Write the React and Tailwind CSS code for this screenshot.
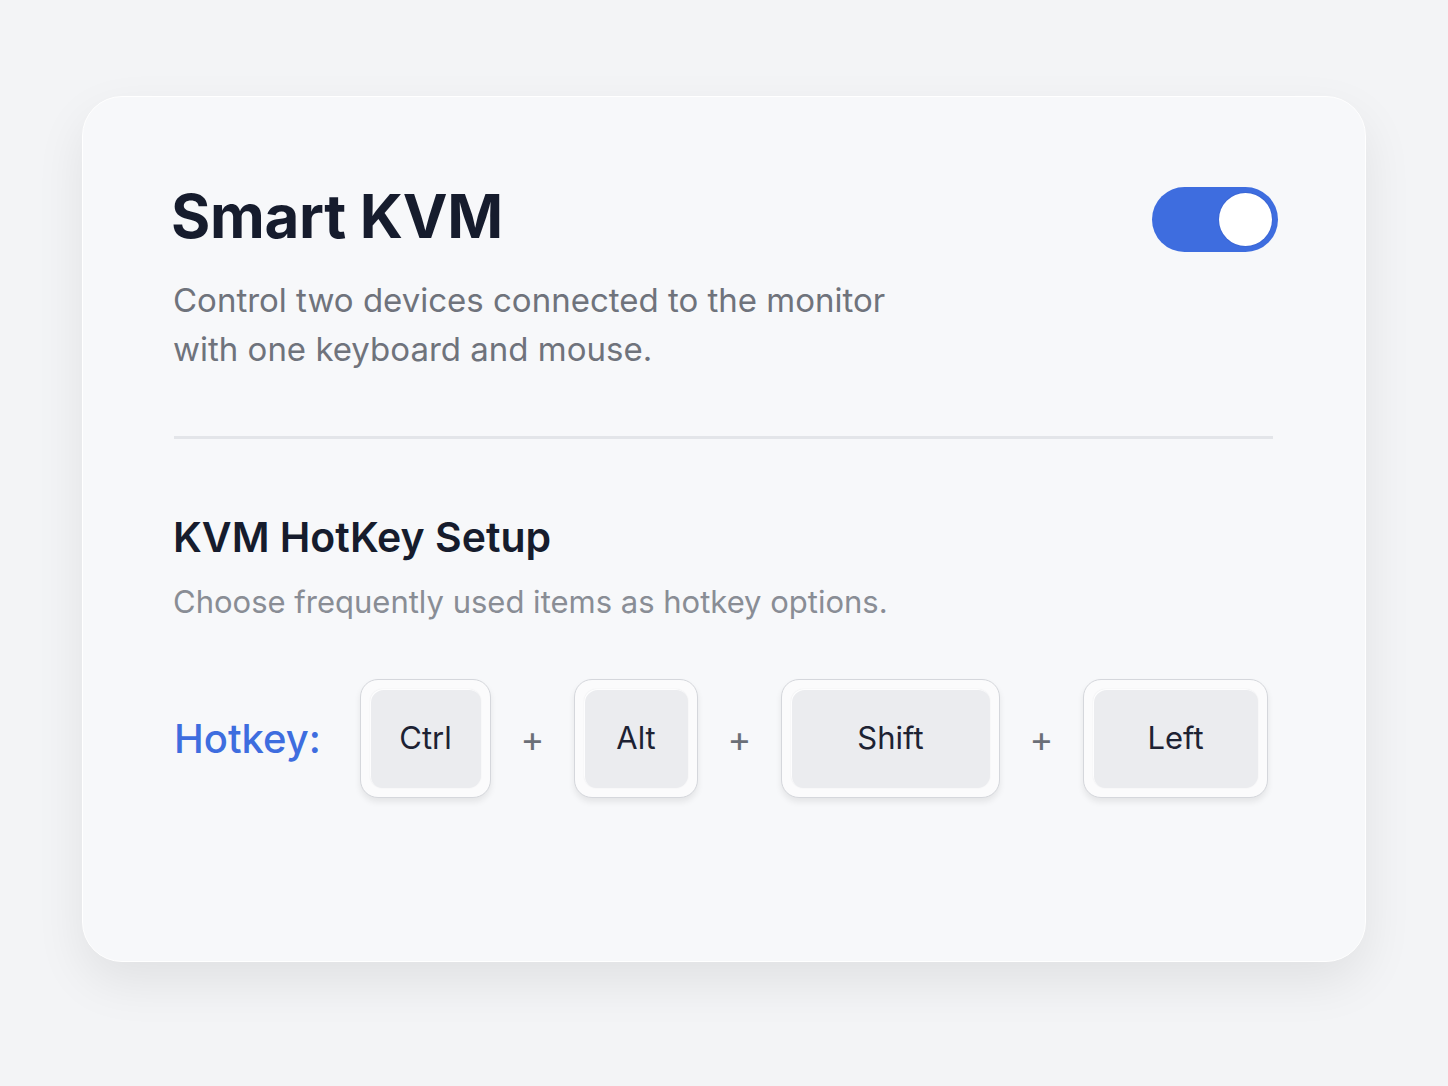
import { useState } from 'react'

const keys = ['Ctrl', 'Alt', 'Shift', 'Left']
const keyWidths = { Ctrl: 'w-[131px]', Alt: 'w-[124px]', Shift: 'w-[219px]', Left: 'w-[185px]' }

function Toggle({ on, onChange }) {
  return (
    <button
      onClick={() => onChange(!on)}
      className={`flex h-[65px] w-[126px] items-center rounded-full p-[6px] transition-colors ${on ? 'justify-end bg-[#3e6ddf]' : 'justify-start bg-[#d1d5db]'}`}
    >
      <span className="h-[53px] w-[53px] rounded-full bg-white shadow-[0_0_0_1px_rgba(40,70,160,0.15)]" />
    </button>
  )
}

function Key({ label }) {
  return (
    <div
      className={`${keyWidths[label]} h-[119px] rounded-[18px] border-[1.5px] border-[#d5d7dc] bg-[#fbfbfc] p-[9px] shadow-[0_4px_6px_rgba(0,0,0,0.08)]`}
    >
      <div className="flex h-full w-full items-center justify-center rounded-[13px] bg-[#ebecef] text-[31px] text-[#1d2233] shadow-[inset_1px_1px_0_rgba(255,255,255,0.9),0_0_2px_rgba(0,0,0,0.06)]">
        {label}
      </div>
    </div>
  )
}

export default function App() {
  const [on, setOn] = useState(true)

  return (
    <div className="flex min-h-[1086px] w-full items-start justify-center bg-[#f3f4f6] pt-[96px] font-['Inter',sans-serif]">
      <div className="h-[866px] w-[1284px] rounded-[40px] border border-white bg-[#f7f8fa] px-[88px] pt-[89px] shadow-[0_20px_50px_rgba(0,0,0,0.08)]">
        <div className="flex items-start justify-between">
          <h1 className="text-[60px] font-bold leading-none tracking-[-0.3px] text-[#161c2d]">Smart KVM</h1>
          <div className="mt-[1px] mr-[-1px]">
            <Toggle on={on} onChange={setOn} />
          </div>
        </div>
        <p className="mt-[24px] ml-[2px] w-[760px] text-[33px] leading-[49px] text-[#6f737c]">
          Control two devices connected to the monitor with one keyboard and mouse.
        </p>

        <div className="mt-[62px] ml-[3px] mr-[4px] h-[3px] bg-[#e3e5e9]" />

        <h2 className="mt-[78px] ml-[2px] text-[41px] font-semibold leading-none text-[#161c2d]">KVM HotKey Setup</h2>
        <p className="mt-[28px] ml-[2px] text-[31px] leading-none text-[#898d95]">
          Choose frequently used items as hotkey options.
        </p>

        <div className="mt-[62px] ml-[3px] flex items-center">
          <span className="w-[186px] text-[40px] font-medium text-[#3e6ddf]">Hotkey:</span>
          {keys.map((k, i) => (
            <div key={k} className="flex items-center">
              {i > 0 && <span className="w-[83px] text-center text-[36px] text-[#6b6f77]">+</span>}
              <Key label={k} />
            </div>
          ))}
        </div>
      </div>
    </div>
  )
}
